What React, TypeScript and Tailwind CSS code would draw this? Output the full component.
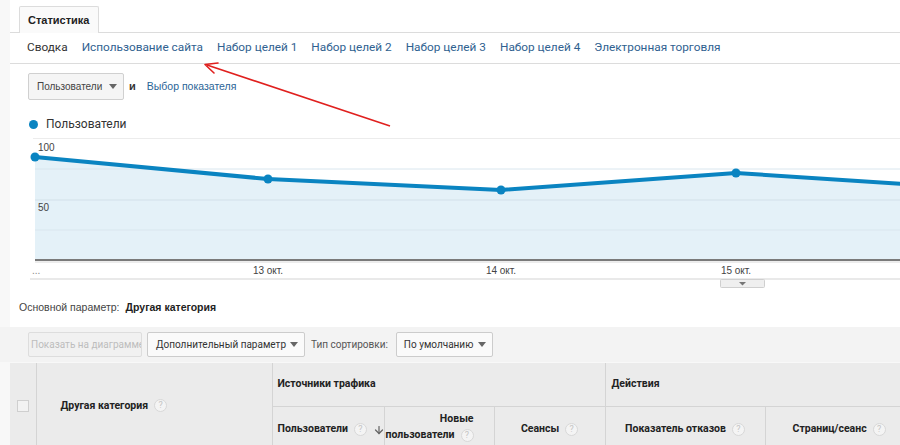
import React from 'react';
import { ArrowDown } from 'lucide-react';

const navItems = [
  'Использование сайта',
  'Набор целей 1',
  'Набор целей 2',
  'Набор целей 3',
  'Набор целей 4',
  'Электронная торговля',
];

function Help() {
  return (
    <span className="inline-flex items-center justify-center w-[13px] h-[13px] rounded-full border border-[#d8d8d8] bg-[#f4f4f4] text-[9px] font-normal text-[#c4c4c4] leading-none align-middle ml-[6px]">
      ?
    </span>
  );
}

function Caret() {
  return (
    <svg width="8" height="5" viewBox="0 0 8 5" className="ml-auto mr-[6px] shrink-0">
      <path d="M0 0 L8 0 L4 5 Z" fill="#666" />
    </svg>
  );
}

function Chart() {
  // coordinates are local to the svg (page x - 30, page y - 138)
  const pts: [number, number][] = [
    [5, 19],
    [238, 41],
    [471, 52],
    [706, 35],
    [872, 46],
  ];
  const line = pts.map((p) => p.join(',')).join(' ');
  const area = `${line} 872,122 5,122`;
  return (
    <svg width="870" height="152" className="block ml-[20px]" style={{ overflow: 'visible' }}>
      <line x1="3" y1="0.5" x2="870" y2="0.5" stroke="#ececec" />
      <polygon points={area} fill="#e4f1f8" />
      <line x1="5" y1="31" x2="870" y2="31" stroke="#d9e6ee" />
      <line x1="5" y1="62" x2="870" y2="62" stroke="#d2e0e9" />
      <line x1="5" y1="92" x2="870" y2="92" stroke="#d9e6ee" />
      <polyline points={line} fill="none" stroke="#0a84c1" strokeWidth="4" strokeLinejoin="round" />
      {pts.slice(0, 4).map(([x, y]) => (
        <circle key={x} cx={x} cy={y} r="4.5" fill="#0a84c1" />
      ))}
      <line x1="5" y1="122" x2="870" y2="122" stroke="#7a7a7a" strokeWidth="2" />
      <line x1="5" y1="124" x2="870" y2="124" stroke="#dadada" strokeWidth="1" />
      <text x="8" y="13" fontSize="10" fill="#444" fontFamily="Liberation Sans, Arial, sans-serif">100</text>
      <text x="8" y="73" fontSize="10" fill="#444" fontFamily="Liberation Sans, Arial, sans-serif">50</text>
      <text x="2" y="136" fontSize="10" fill="#888" fontFamily="Liberation Sans, Arial, sans-serif">...</text>
      {[
        [238, '13 окт.'],
        [471, '14 окт.'],
        [706, '15 окт.'],
      ].map(([x, t]) => (
        <text key={t as string} x={x as number} y="136" fontSize="10" fill="#444" textAnchor="middle" fontFamily="Liberation Sans, Arial, sans-serif">
          {t}
        </text>
      ))}
      <line x1="0" y1="141" x2="870" y2="141" stroke="#e2e2e2" strokeWidth="1.5" />
      <rect x="690.5" y="141.5" width="44" height="8" rx="1" fill="#efefef" stroke="#cfcfcf" />
      <path d="M709 144 L716 144 L712.5 147.5 Z" fill="#777" />
    </svg>
  );
}

export default function App() {
  return (
    <div className="relative w-[900px] h-[445px] overflow-hidden bg-[#f8f8f8] font-['Roboto',sans-serif]">
      <div className="ml-[10px] bg-white">
        {/* Tab */}
        <div className="pt-[6px] pl-[9px] border-b border-[#dcdcdc] flex">
          <div className="-mb-px h-[27px] px-[8px] flex items-center bg-[#fafafa] border border-b-0 border-[#dcdcdc] rounded-t-[2px] text-[11px] font-bold text-[#222] font-['Liberation_Sans',Arial,sans-serif]">
            Статистика
          </div>
        </div>

        {/* Sub navigation */}
        <div className="h-[31px] flex items-center pl-[17px] gap-[14px] border-b border-[#dcdcdc] text-[11.8px]">
          <span className="text-[#333]">Сводка</span>
          {navItems.map((n) => (
            <span key={n} className="text-[#2f6190]">
              {n}
            </span>
          ))}
        </div>

        {/* Metric selector */}
        <div className="mt-[9px] pl-[18px] flex items-center font-['Liberation_Sans',Arial,sans-serif]">
          <div className="h-[27px] w-[96px] flex items-center pl-[8px] bg-[#f5f5f5] border border-[#d0d0d0] rounded-[2px] text-[10px] text-[#444]">
            Пользователи
            <Caret />
          </div>
          <span className="ml-[5px] text-[11px] font-bold text-[#333]">и</span>
          <span className="ml-[11px] text-[10.5px] text-[#2a6496]">Выбор показателя</span>
        </div>

        {/* Legend */}
        <div className="mt-[16px] pl-[19px] h-[16px] flex items-center">
          <span className="w-[9px] h-[9px] rounded-full bg-[#0a84c1]" />
          <span className="ml-[8px] text-[12px] text-[#333]">Пользователи</span>
        </div>

        {/* Chart */}
        <div className="mt-[6px] h-[150px]">
          <Chart />
        </div>

        {/* Primary dimension */}
        <div className="h-[39px] pl-[9px] flex items-center text-[10.5px] font-['Liberation_Sans',Arial,sans-serif]">
          <span className="text-[#444]">Основной параметр:</span>
          <span className="ml-[6px] font-bold text-[#222]">Другая категория</span>
        </div>
      </div>

      {/* Toolbar */}
      <div className="h-[35px] bg-[#f3f3f3] pl-[28px] flex items-center text-[10px] whitespace-nowrap font-['Roboto',sans-serif]">
        <div className="h-[25px] w-[114px] flex items-center pl-[2px] bg-[#f1f1f1] border border-[#dddddd] rounded-[2px] text-[#bdbdbd] overflow-hidden">
          Показать на диаграмме
        </div>
        <div className="ml-[5px] h-[25px] w-[158px] flex items-center pl-[8px] bg-[#fafafa] border border-[#cccccc] rounded-[2px] text-[#333]">
          Дополнительный параметр
          <Caret />
        </div>
        <span className="ml-[6px] text-[#555]">Тип сортировки:</span>
        <div className="ml-[8px] h-[25px] w-[97px] flex items-center pl-[7px] bg-[#fafafa] border border-[#cccccc] rounded-[2px] text-[#333]">
          По умолчанию
          <Caret />
        </div>
      </div>

      {/* Table header */}
      <div className="ml-[10px] mt-px">
        <table className="border-collapse bg-[#ebebeb] text-[10.5px] font-bold text-[#222] font-['Roboto',sans-serif] table-fixed w-[1000px]">
          <colgroup>
            <col className="w-[26px]" />
            <col className="w-[236px]" />
            <col className="w-[112px]" />
            <col className="w-[110px]" />
            <col className="w-[111px]" />
            <col className="w-[160px]" />
            <col className="w-[245px]" />
          </colgroup>
          <tbody>
            <tr className="h-[43px]">
              <td rowSpan={2} className="border-r border-[#d4d4d4] align-middle">
                <div className="ml-[7px] mb-[4px] w-[12px] h-[12px] bg-[#f2f2f2] border border-[#cfcfcf]" />
              </td>
              <td rowSpan={2} className="border-r border-[#d4d4d4] pl-[24px] pb-[4px] align-middle">
                Другая категория
                <Help />
              </td>
              <td colSpan={3} className="border-r border-b border-[#d4d4d4] pl-[5px]">
                Источники трафика
              </td>
              <td colSpan={2} className="border-b border-[#d4d4d4] pl-[6px]">
                Действия
              </td>
            </tr>
            <tr className="h-[46px]">
              <td className="border-r border-[#d4d4d4] pl-[5px] whitespace-nowrap">
                Пользователи
                <Help />
                <ArrowDown size={12} strokeWidth={2.5} color="#666" className="inline-block align-middle ml-[6px]" />
              </td>
              <td className="border-r border-[#d4d4d4] text-right pr-[20px] leading-[16px] pb-[4px]">
                Новые
                <br />
                пользователи
                <Help />
              </td>
              <td className="border-r border-[#d4d4d4] text-center">
                Сеансы
                <Help />
              </td>
              <td className="border-r border-[#d4d4d4] text-center">
                Показатель отказов
                <Help />
              </td>
              <td className="pl-[27px] text-left">
                Страниц/сеанс
                <Help />
              </td>
            </tr>
          </tbody>
        </table>
      </div>

      {/* Red annotation arrow */}
      <svg className="absolute left-0 top-0 pointer-events-none" width="900" height="445">
        <line x1="390" y1="126" x2="207" y2="65" stroke="#e0201e" strokeWidth="1.6" />
        <path d="M205 64.5 L218 63 M205 64.5 L214 73" stroke="#e0201e" strokeWidth="1.6" fill="none" strokeLinecap="round" />
      </svg>
    </div>
  );
}
